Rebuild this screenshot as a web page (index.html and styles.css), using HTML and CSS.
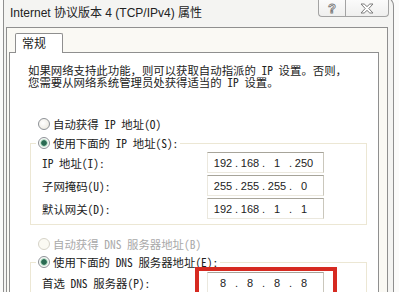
FILE: index.html
```html
<!DOCTYPE html>
<html>
<head>
    <meta charset="UTF-8">
    <title>Internet 协议版本 4 (TCP/IPv4) 属性</title>
    <link rel="stylesheet" href="styles.css">
</head>
<body>
    <div class="window">
        <div class="titlebar">
            <span class="title">Internet 协议版本 4 (TCP/IPv4) 属性</span>
            <div class="caption">
                <span class="cap-btn help">?</span>
                <span class="cap-btn close">
                    <svg width="14" height="11" viewBox="0 0 14 11">
                        <path d="M1 1H4.2L7 3.6L9.8 1H13L8.8 5.5L13 10H9.8L7 7.4L4.2 10H1L5.2 5.5Z" fill="#fff" stroke="#7c7c7c" stroke-width="1" stroke-linejoin="round"/>
                    </svg>
                </span>
            </div>
        </div>

        <div class="client">
            <div class="tabs">
                <span class="tab">常规</span>
            </div>
            <div class="page">
                <div class="intro">
                    <div class="intro-line">如果网络支持此功能，则可以获取自动指派的 IP 设置。否则，</div>
                    <div class="intro-line">您需要从网络系统管理员处获得适当的 IP 设置。</div>
                </div>

                <div class="option first"><span class="radio"></span>自动获得 IP 地址(O)</div>

                <div class="group">
                    <div class="option legend"><span class="radio checked"></span>使用下面的 IP 地址(S):</div>
                    <div class="field-row">
                        <span class="field-label">IP 地址(I):</span>
                        <span class="ip-box"><span>192</span><i>.</i><span>168</span><i>.</i><span>1</span><i>.</i><span>250</span></span>
                    </div>
                    <div class="field-row">
                        <span class="field-label">子网掩码(U):</span>
                        <span class="ip-box"><span>255</span><i>.</i><span>255</span><i>.</i><span>255</span><i>.</i><span>0</span></span>
                    </div>
                    <div class="field-row">
                        <span class="field-label">默认网关(D):</span>
                        <span class="ip-box"><span>192</span><i>.</i><span>168</span><i>.</i><span>1</span><i>.</i><span>1</span></span>
                    </div>
                </div>

                <div class="option disabled"><span class="radio"></span>自动获得 DNS 服务器地址(B)</div>

                <div class="group dns">
                    <div class="option legend"><span class="radio checked"></span>使用下面的 DNS 服务器地址(E):</div>
                    <div class="field-row">
                        <span class="field-label">首选 DNS 服务器(P):</span>
                        <span class="ip-box"><span>8</span><i>.</i><span>8</span><i>.</i><span>8</span><i>.</i><span>8</span></span>
                    </div>
                </div>
            </div>
        </div>
    </div>

    <div class="highlight"></div>
</body>
</html>
```

FILE: styles.css
```css
* {
    box-sizing: border-box;
}

body {
    margin: 0;
    width: 399px;
    height: 292px;
    overflow: hidden;
    position: relative;
    background: #fbfbfa;
    font-family: "Noto Sans Mono CJK SC", "Liberation Mono", "Noto Sans CJK SC", monospace;
    font-size: 11.4px;
    color: #222;
}

/* window frame */

.window {
    margin: -4px 0 0 3px;
    width: 391px;
    height: 300px;
    border: 1px solid #8f8f8f;
    border-bottom: none;
    border-top-right-radius: 10px;
    background: #f4f4f2;
}

.titlebar {
    display: flex;
    height: 30px;
    padding-left: 6px;
}

.title {
    padding-top: 9px;
    line-height: 14px;
    font-family: "Liberation Sans", "Noto Sans CJK SC", sans-serif;
    font-size: 12px;
    color: #222;
}

.caption {
    display: flex;
    height: 20px;
    margin-left: auto;
    margin-right: 4px;
}

.cap-btn {
    display: flex;
    align-items: center;
    justify-content: center;
    padding-top: 3px;
    border: 1px solid #a3a3a3;
    border-top: none;
    background: linear-gradient(#fdfdfd, #efefee);
}

.help {
    width: 27px;
    border-right: none;
    border-radius: 0 0 0 4px;
    font-family: "Liberation Sans", sans-serif;
    font-weight: bold;
    font-size: 13px;
    color: #fff;
    -webkit-text-stroke: 0.9px #7c7c7c;
}

.close {
    width: 44px;
    border-radius: 0 0 4px 0;
}

/* client area and tab */

.client {
    height: 270px;
    margin: 0 5px 0 2px;
    padding: 5px 8px 0 2px;
    border: 1px solid #8f8f8f;
    border-bottom: none;
    background: #faf9f4;
}

.tabs {
    display: flex;
    padding-left: 6px;
}

.tab {
    position: relative;
    z-index: 1;
    width: 48px;
    height: 20px;
    margin-bottom: -1px;
    padding-left: 6px;
    border: 1px solid #8f8f8f;
    border-bottom: none;
    border-radius: 2px 2px 0 0;
    background: #fff;
    font-family: "Noto Sans CJK SC", sans-serif;
    font-size: 12px;
    line-height: 18px;
}

.page {
    height: 250px;
    padding-top: 11px;
    border: 1px solid #8f8f8f;
    border-bottom: none;
    background: #fff;
}

.intro {
    margin-left: 18px;
}

.intro-line {
    height: 12px;
    line-height: 12px;
    white-space: nowrap;
}

/* radio options */

.option {
    display: flex;
    align-items: center;
    gap: 3px;
    height: 19px;
    white-space: nowrap;
}

.option.first {
    margin: 26px 0 0 28px;
}

.option.disabled {
    margin: 9px 0 0 28px;
    color: #a9a9a9;
}

.radio {
    width: 12px;
    height: 12px;
    border: 1px solid #8d9196;
    border-radius: 50%;
    background: radial-gradient(circle at 40% 40%, #fff, #e8e5da);
}

.radio.checked {
    background: radial-gradient(circle, #2a6a53 0 2.4px, #8fc4a8 3px, #eef6f0 4px, #fff 5px);
}

.disabled .radio {
    border-color: #d6d3c8;
    background: #fbfaf3;
}

/* group boxes */

.group {
    margin: 10px 11px 0 20px;
    padding-bottom: 3px;
    border: 1px solid #ece7d4;
}

.group.dns {
    margin-top: 9px;
    height: 40px;
    border-bottom: none;
}

.option.legend {
    width: max-content;
    height: 18px;
    margin: -10px 0 0 5px;
    padding: 0 2px;
    background: #fff;
}

.field-row {
    display: flex;
    align-items: center;
    height: 21px;
    margin-bottom: 2px;
    padding-left: 11px;
    white-space: nowrap;
}

.dns .field-row {
    margin-top: 1px;
}

.field-label {
    width: 165px;
}

.ip-box {
    display: flex;
    align-items: center;
    width: 117px;
    height: 21px;
    padding-left: 4px;
    border: 1px solid;
    border-color: #a7a49a #cac7bc #ebe8de #ebe8de;
    background: #fff;
    font-family: "Liberation Sans", sans-serif;
    font-size: 11px;
    color: #222;
}

.ip-box span {
    width: 22px;
    text-align: center;
}

.ip-box i {
    width: 5px;
    font-style: normal;
    text-align: center;
}

/* annotation */

.highlight {
    position: absolute;
    left: 195px;
    top: 267px;
    width: 142px;
    height: 40px;
    border: 4px solid #d62a21;
}
```
